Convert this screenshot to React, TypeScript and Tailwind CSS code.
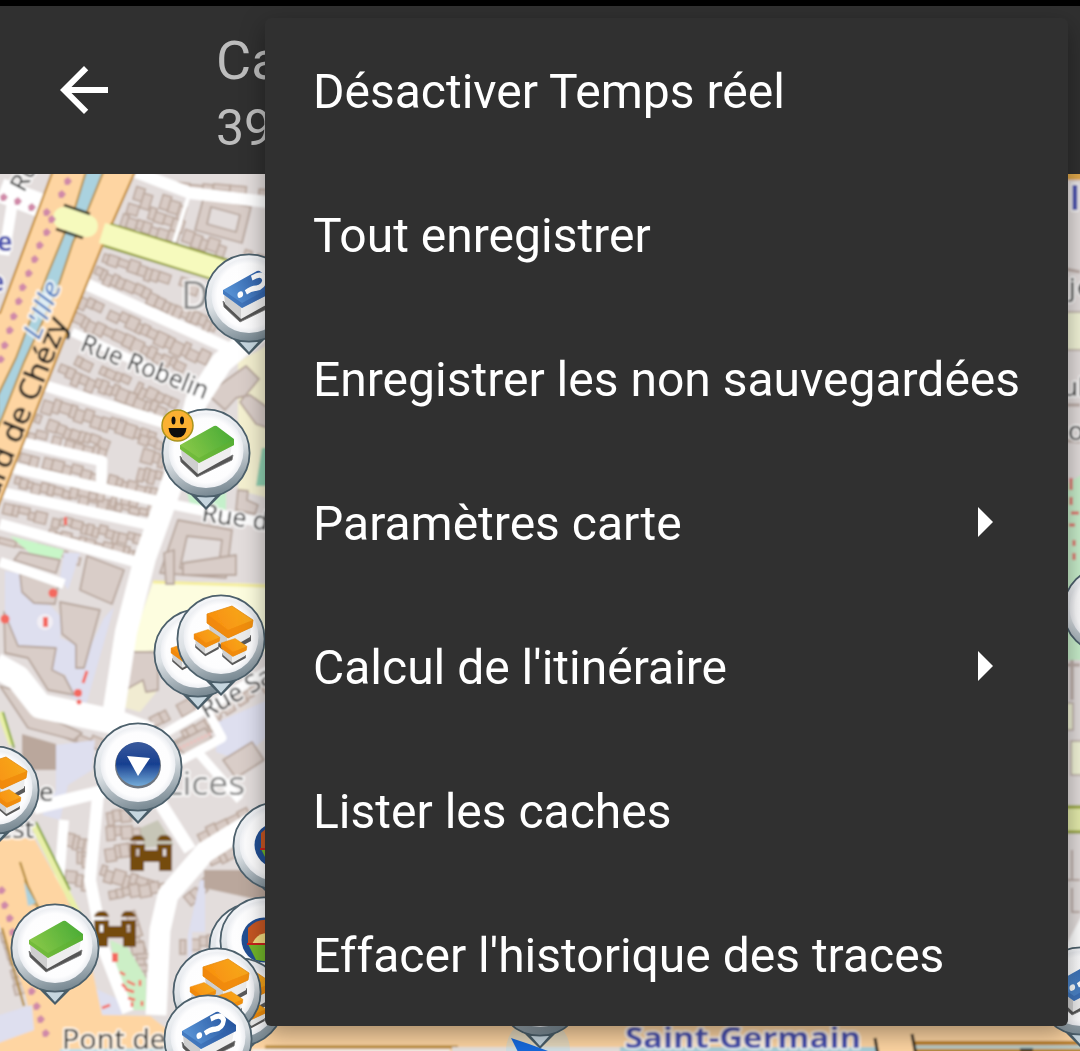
import React from 'react';

type Pt = [number, number];

/* ---------- map helpers ---------- */

function makeRandom(seed: number) {
  let s = seed * 7919 + 17;
  return () => {
    s = (s * 1103515245 + 12345) % 2147483648;
    return s / 2147483648;
  };
}

function Houses({ from, to, depth, seed, step = 9 }: { from: Pt; to: Pt; depth: number; seed: number; step?: number }) {
  const rnd = makeRandom(seed);
  const len = Math.hypot(to[0] - from[0], to[1] - from[1]);
  const angle = (Math.atan2(to[1] - from[1], to[0] - from[0]) * 180) / Math.PI;
  const boxes: React.ReactElement[] = [];
  let x = 0;
  let i = 0;
  while (x < len) {
    const w = step * (0.5 + rnd() * 0.8);
    const off = rnd() * depth * 0.4;
    const h = depth * (0.55 + rnd() * 0.45);
    if (rnd() > 0.08) boxes.push(<rect key={i} x={x} y={off} width={w} height={h} />);
    x += w;
    i += 1;
  }
  return (
    <g transform={`translate(${from[0]} ${from[1]}) rotate(${angle})`} fill="#d8cbc5" stroke="#bba89d" strokeWidth="1.6">
      {boxes}
    </g>
  );
}

const rows: { from: Pt; to: Pt; depth: number; step?: number }[] = [
  { from: [137, 186], to: [186, 201], depth: 16 },
  { from: [130, 200], to: [182, 216], depth: 14 },
  { from: [124, 213], to: [176, 230], depth: 14 },
  { from: [178, 180], to: [265, 188], depth: 9, step: 14 },
  { from: [186, 228], to: [265, 255], depth: 14 },
  { from: [106, 250], to: [200, 282], depth: 13 },
  { from: [98, 265], to: [215, 318], depth: 13 },
  { from: [82, 292], to: [205, 350], depth: 14 },
  { from: [76, 310], to: [180, 358], depth: 13 },
  { from: [80, 352], to: [175, 398], depth: 13 },
  { from: [62, 362], to: [168, 405], depth: 14 },
  { from: [46, 395], to: [160, 432], depth: 14 },
  { from: [38, 412], to: [108, 438], depth: 13 },
  { from: [30, 428], to: [102, 446], depth: 12 },
  { from: [142, 432], to: [164, 440], depth: 14 },
  { from: [144, 448], to: [162, 453], depth: 14 },
  { from: [140, 465], to: [160, 470], depth: 14 },
  { from: [110, 474], to: [160, 488], depth: 12 },
  { from: [22, 450], to: [96, 470], depth: 12 },
  { from: [16, 476], to: [155, 508], depth: 11 },
  { from: [72, 484], to: [155, 503], depth: 11 },
  { from: [5, 502], to: [60, 515], depth: 12 },
  { from: [62, 515], to: [144, 535], depth: 12 },
  { from: [50, 528], to: [138, 549], depth: 10 },
  { from: [0, 534], to: [70, 552], depth: 10, step: 18 },
  { from: [66, 724], to: [100, 738], depth: 12, step: 13 },
  { from: [116, 712], to: [150, 720], depth: 10 },
  { from: [148, 716], to: [178, 700], depth: 14, step: 12 },
  { from: [168, 738], to: [212, 714], depth: 16, step: 13 },
  { from: [180, 730], to: [262, 680], depth: 10 },
  { from: [68, 833], to: [88, 837], depth: 14 },
  { from: [68, 850], to: [86, 850], depth: 16 },
  { from: [66, 870], to: [84, 872], depth: 16 },
  { from: [106, 810], to: [134, 806], depth: 13 },
  { from: [106, 826], to: [134, 824], depth: 14 },
  { from: [104, 846], to: [130, 842], depth: 14 },
  { from: [103, 864], to: [150, 878], depth: 14 },
  { from: [108, 888], to: [164, 878], depth: 13 },
  { from: [136, 910], to: [146, 940], depth: 15 },
  { from: [148, 942], to: [150, 975], depth: 13 },
  { from: [75, 902], to: [88, 935], depth: 12 },
  { from: [195, 830], to: [240, 808], depth: 16, step: 11 },
  { from: [208, 858], to: [262, 833], depth: 10 },
  { from: [180, 934], to: [212, 934], depth: 16 },
  { from: [182, 895], to: [200, 880], depth: 14 },
  { from: [12, 930], to: [26, 985], depth: 12 },
];

const roads: { d: string; w: number }[] = [
  { d: 'M125 168 L190 193 L268 202', w: 12 },
  { d: 'M189 195 L174 242', w: 4 },
  { d: 'M86 284 L228 348', w: 12 },
  { d: 'M72 332 L205 394', w: 9 },
  { d: 'M270 322 L222 362 L196 402 L184 450 L166 500 L145 558 L126 632 L112 722', w: 22 },
  { d: 'M46 386 L168 424', w: 11 },
  { d: 'M20 442 L102 461 L101 484', w: 11 },
  { d: 'M10 467 L165 503', w: 11 },
  { d: 'M0 492 L155 526', w: 11 },
  { d: 'M0 524 L140 563', w: 11 },
  { d: 'M0 562 L64 584', w: 10 },
  { d: 'M175 505 L268 524', w: 10 },
  { d: 'M-5 665 L18 678 L40 706 L115 722 L150 735', w: 25 },
  { d: 'M140 748 L206 709 L268 670', w: 9 },
  { d: 'M208 712 L222 738 L160 772', w: 9 },
  { d: 'M196 750 L240 800', w: 9 },
  { d: 'M152 790 L190 850', w: 13 },
  { d: 'M34 808 L108 790', w: 13 },
  { d: 'M98 795 L90 880 L104 950 L128 1012', w: 12 },
  { d: 'M64 820 L58 895', w: 10 },
  { d: 'M265 815 L205 852 L168 895 L160 930 L156 1015', w: 21 },
  { d: 'M0 190 L42 206', w: 24 },
  { d: 'M12 205 L4 255', w: 11 },
];

const dots: Pt[] = [
  [68, 181], [62, 194], [4, 197], [18, 201], [32, 207], [47, 212], [52, 219], [47, 232], [40, 245], [35, 259], [29, 273],
  [23, 287], [19, 301], [14, 316], [10, 330], [5, 345], [1, 359], [2, 890], [5, 905], [10, 918], [13, 932], [32, 991], [37, 1006],
  [41, 1019], [46, 1033], [888, 1035], [891, 1049],
];

/* ---------- pins and their symbols ---------- */

function Book({ kind }: { kind: 'green' | 'blue' }) {
  return (
    <g>
      <path d="M-26 3 L-9 19 L27 2 L26 7 L-9 24 L-25 9 Z" fill="#555" stroke="#777" strokeWidth="0.8" strokeLinejoin="round" />
      <path d="M-25 -4 L-8 8 L-8 21 L-24 6 Z" fill="#cfcfcf" />
      <path d="M-8 8 L26 -8 L24 3 L-8 21 Z" fill="#eee" />
      <path
        d="M-26 -8 L8 -27 Q10 -28 12 -26 L28 -14 L28 -8 L-7 10 L-26 -4 Z"
        fill={kind === 'green' ? 'url(#bookGreen)' : 'url(#bookBlue)'}
      />
      <path d="M-26 -8 L-7 5 L28 -14 L28 -8 L-7 10 L-26 -4 Z" fill={kind === 'green' ? '#5fb030' : '#2f5fa8'} opacity="0.5" />
      {kind === 'blue' && (
        <g transform="translate(2 -11) rotate(-22) skewX(-14)" fill="none" stroke="#fff" strokeWidth="5">
          <path d="M2 -8 Q14 -10 15 -2 Q13 5 5 3 Q0 1 -6 3" />
          <circle cx="-12" cy="3" r="3" fill="#fff" stroke="none" />
        </g>
      )}
    </g>
  );
}

function Brick({ x, y, s }: { x: number; y: number; s: number }) {
  return (
    <g transform={`translate(${x} ${y}) scale(${s})`}>
      <path d="M-21 9 L-3 25 L21 12 L21 18 L-3 31 L-21 15 Z" fill="#5a5a5a" />
      <path d="M-21 0 L-3 12 L-3 27 L-20 12 Z" fill="#cfcfcf" />
      <path d="M-3 12 L21 0 L20 14 L-3 27 Z" fill="#ececec" />
      <path d="M-23 -9 L2 -17 L23 -3 L22 4 L-2 15 L-23 0 Z" fill="url(#brick)" stroke="#e38a10" strokeWidth="0.8" />
      <path d="M-23 -9 L-2 7 L23 -3 L22 4 L-2 15 L-23 0 Z" fill="#ee8609" opacity="0.7" />
    </g>
  );
}

type Kind = 'green' | 'blue' | 'bricks' | 'down' | 'globe' | 'none';

function Pin({ x, y, kind }: { x: number; y: number; kind: Kind }) {
  return (
    <g transform={`translate(${x} ${y})`}>
      <path d="M-17 40 L0 57 L17 40 Z" fill="#4a5d68" />
      <path d="M-9 44 L0 54 L9 44 Z" fill="#c6d6df" />
      <circle r="43.6" fill="url(#rim)" stroke="#4d616c" strokeWidth="1.8" />
      <circle r="37.5" cy="-2.5" fill="url(#face)" />
      {kind === 'green' && <Book kind="green" />}
      {kind === 'blue' && <Book kind="blue" />}
      {kind === 'bricks' && (
        <g>
          <Brick x={9} y={-16} s={1} />
          <Brick x={-14} y={0} s={0.56} />
          <Brick x={13} y={9} s={0.56} />
        </g>
      )}
      {kind === 'down' && (
        <g>
          <circle r="23" cy="-1.5" fill="#6c7480" />
          <circle r="22" cy="-3" fill="url(#badge)" />
          <path d="M-11 -11 L12 -9 L0 9 Z" fill="#fff" />
        </g>
      )}
      {kind === 'globe' && (
        <g>
          <circle r="22.5" cy="-1" fill="#234f93" />
          <path d="M-16 -13 Q-7 -23 6 -21 L6 4 L-16 3 Z" fill="#c65722" />
          <path d="M-16 3 L8 3 L6 21 L-8 19 Z" fill="#72b62a" />
          <path d="M-9 -2 Q-4 -9 6 -8 L6 3 L-12 3 Z" fill="#f3dc80" />
          <path d="M-17 3 L8 3" stroke="#c8241b" strokeWidth="2" />
        </g>
      )}
    </g>
  );
}

function Castle({ x, y }: { x: number; y: number }) {
  return (
    <path
      transform={`translate(${x} ${y})`}
      fill="#744b09"
      fillRule="evenodd"
      d="M0 6 Q1 1 6 0 H10 Q14 1 15 6 Z M27 6 Q28 1 32 0 H36 Q41 1 42 6 Z M0 9 H15 V15 H27 V9 H42 V36 H29 V27 H14 V36 H0 Z M6 14 V21 H9 V14 Z M33 14 V21 H36 V14 Z"
    />
  );
}

function Halo({ children, ...rest }: React.SVGProps<SVGTextElement>) {
  return (
    <text
      stroke="#fff"
      strokeOpacity="0.75"
      strokeWidth="4"
      strokeLinejoin="round"
      paintOrder="stroke"
      fontFamily="Open Sans, Noto Sans, sans-serif"
      lengthAdjust="spacingAndGlyphs"
      {...rest}
    >
      {children}
    </text>
  );
}

function CityMap() {
  return (
    <svg className="block h-[877px] w-full" viewBox="0 174 1080 877" aria-hidden="true">
      <defs>
        <linearGradient id="rim" x1="0.35" y1="0" x2="0.6" y2="1">
          <stop offset="0" stopColor="#f6f7fa" />
          <stop offset="0.5" stopColor="#dce1e5" />
          <stop offset="1" stopColor="#74858f" />
        </linearGradient>
        <radialGradient id="face">
          <stop offset="0" stopColor="#fff" />
          <stop offset="0.85" stopColor="#fdfdfe" />
          <stop offset="1" stopColor="#eceef2" />
        </radialGradient>
        <linearGradient id="bookGreen" x1="0" y1="0.6" x2="1" y2="0.2">
          <stop offset="0" stopColor="#8ac948" />
          <stop offset="1" stopColor="#48ab36" />
        </linearGradient>
        <linearGradient id="bookBlue" x1="0" y1="0.6" x2="1" y2="0.2">
          <stop offset="0" stopColor="#5b97d9" />
          <stop offset="1" stopColor="#23509a" />
        </linearGradient>
        <linearGradient id="brick" x1="0" y1="0.6" x2="1" y2="0.2">
          <stop offset="0" stopColor="#f98c0c" />
          <stop offset="1" stopColor="#f6ab1e" />
        </linearGradient>
        <linearGradient id="badge" x1="0" y1="0" x2="0" y2="1">
          <stop offset="0" stopColor="#3a5a9c" />
          <stop offset="0.5" stopColor="#173f90" />
          <stop offset="1" stopColor="#74abd8" />
        </linearGradient>
        <filter id="soft" filterUnits="userSpaceOnUse" x="0" y="170" width="1080" height="885">
          <feGaussianBlur stdDeviation="0.95" />
        </filter>
        <filter id="softPin" filterUnits="userSpaceOnUse" x="0" y="170" width="1080" height="885">
          <feGaussianBlur stdDeviation="0.5" />
        </filter>
      </defs>

      <g filter="url(#soft)">
        <rect x="-10" y="160" width="1100" height="910" fill="#e3dddc" />
        {rows.map((r, i) => (
          <Houses key={i} from={r.from} to={r.to} depth={r.depth} step={r.step} seed={i + 3} />
        ))}

        {/* parks, gardens and squares */}
        <path d="M238 362 L268 345 L268 498 L238 490 Z" fill="#f4f0d0" />
        <path d="M153 581 L268 584 L268 652 L129 652 Z" fill="#fdfddf" />
        <path d="M153 582 L268 586" stroke="#f5ee9b" strokeWidth="3" />
        <path d="M10 536 L64 550 L60 560 L30 553 Z" fill="#c8f7c8" />
        <path d="M187 492 H226 V510 L190 504 Z" fill="#c5f0cb" />
        <path d="M262 448 H268 V486 H256 Z" fill="#8fd0b1" />
        <path d="M5 571 L22 574 L30 592 L50 605 L62 618 L60 638 L78 645 L80 668 L104 618 L114 607 L86 705 L66 694 L66 675 L52 670 L54 648 L18 646 L5 612 Z" fill="#dedfef" />
        <path d="M64 553 L80 553 L68 590 L60 578 Z" fill="#dedfef" />
        <path d="M56 745 L95 740 L92 770 L68 785 L60 820 L42 815 L56 790 Z" fill="#dedfef" />
        <path d="M218 722 L268 700 L268 736 L240 760 L216 752 Z" fill="#dedfef" />
        <path d="M188 935 L200 880 L205 880 V932 H192 V980 H188 Z M94 988 L120 1000 L122 1015 H102 Z" fill="#dedfef" />
        <path d="M125 655 L152 650 L158 690 L140 712 L116 705 Z" fill="#f1ecd2" />

        {/* large buildings */}
        <g fill="#d9cdc8" stroke="#b7a69c" strokeWidth="1.8" strokeLinejoin="round">
          <path d="M204 196 L251 207 L242 243 L195 230 Z M211 207 L207 224 L236 232 L240 215 Z" fillRule="evenodd" />
          <path d="M246 366 L259 379 L240 402 L256 424 L268 428 V408 L250 395 L236 398 L225 410 L207 394 Z" />
          <path d="M178 520 L232 530 L226 578 L160 573 Z M187 536 L180 568 L218 572 L222 540 Z" fillRule="evenodd" />
          <path d="M238 490 L248 491 L247 500 L258 505 L255 514 L236 510 Z" />
          <path d="M20 574 L58 586 L55 604 L34 603 L22 592 Z M60 602 L100 610 L84 668 L76 668 L76 645 L62 634 Z M4 612 L18 646 L56 648 L52 670 L64 676 L74 695 L48 690 L28 658 L5 653 Z" />
          <path d="M20 552 L60 560 L56 573 L14 560 Z M87 556 L124 570 L112 604 L98 598 L80 590 Z" />
          <path d="M164 553 L166 584 L174 584 L174 550 Z M183 563 L236 555 V575 H183 Z" />
          <path d="M130 652 L158 652 L158 690 L146 692 L143 680 L125 690 Z M0 686 L22 692 L40 714 L82 733 L74 740 L28 728 Z" />
          <path d="M223 760 L252 742 L264 760 L236 778 Z M175 744 L205 728 L212 738 L186 756 Z" />
        </g>
        <path d="M22 734 L56 744 V770 H22 Z M204 870 H268 V902 L204 888 Z" fill="#baa79c" />
        <path d="M140 828 L158 820 L174 845 L144 848 Z" fill="#c7c6b7" />
        <path d="M110 940 L128 948 L146 978 V1010 L124 1010 Z" fill="#ccefc6" />

        {/* streets */}
        {roads.map((r, i) => (
          <path key={i} d={r.d} fill="none" stroke="#fff" strokeWidth={r.w} strokeLinejoin="round" />
        ))}
        <path d="M176 750 L212 733" stroke="#f1bdb9" strokeWidth="3" strokeDasharray="2 2" />

        {/* boulevard along the water */}
        <path d="M55 165 L138 165 L103 244 L68 330 L-12 532 V313 L0 313 Z" fill="#fed5a2" stroke="#bd8620" strokeWidth="2" />
        <path d="M88 165 L106 165 L87 212 L73 242 L57 290 L24 362 L-2 428 V395 L16 358 L47 276 L75 208 Z" fill="#aad2df" stroke="#b08833" strokeWidth="1.8" />
        <path d="M107 235 L228 272" stroke="#8c9928" strokeWidth="25" />
        <path d="M102 233 L230 273" stroke="#f6fabd" strokeWidth="21" />
        <path d="M64 218 L87 226" stroke="#f6fabd" strokeWidth="22" strokeLinecap="round" />
        <path d="M64 205 L90 214 M56 229 L83 238" stroke="#24240e" strokeWidth="2.5" />

        <path d="M-2 838 L34 838 L64 892 L88 950 L102 1015 L150 1016 L168 1030 L175 1065 H-12 V1044 L34 1030 L24 990 L-2 922 Z" fill="#fed5a2" />
        <path d="M-10 1018 L32 1005 L34 1030 L-10 1046 Z" fill="#dedfef" />
        <path d="M2 928 L24 1006 M20 862 L34 905 M25 880 L44 920" fill="none" stroke="#b08833" strokeWidth="2.2" />
        <path d="M24 882 L36 903 L28 906 Z" fill="#aad2df" />
        <path d="M0 712 L12 745 M34 826 L80 918" stroke="#e9f0a7" strokeWidth="6" />
        <path d="M3 712 L14 748 M36 822 L70 890" stroke="#7fa12e" strokeWidth="2" />
        <path d="M60 1051 L268 1049" stroke="#c3dfe8" strokeWidth="4" />

        {dots.map(([x, y], i) => (
          <path key={i} d={`M${x - 4} ${y - 1} l4 -3 l4 4 l-3 4 h-4 Z`} fill="#d089a8" />
        ))}
        <g fill="#f4695f">
          <rect x="64" y="517" width="3" height="8" />
          <circle cx="53" cy="593" r="4.5" />
          <circle cx="5" cy="619" r="4.5" />
          <circle cx="45" cy="622" r="8" fill="#f2eef4" />
          <rect x="43" y="617" width="5" height="10" />
          <circle cx="78" cy="693" r="4" />
          <circle cx="79" cy="702" r="2.5" />
          <path d="M87 671 l-4 12" stroke="#f4695f" strokeWidth="3" />
          <rect x="112" y="953" width="6" height="9" />
          <path d="M120 972 l5 3 m2 6 l8 4 m-10 4 l9 3 m-6 6 l7 2 m5 -20 v6 m-18 -2 l4 4 m6 14 v5 m10 -6 v5 M102 1008 l8 -3" stroke="#f4695f" strokeWidth="2.5" />
        </g>

        <Castle x={130} y={835} />
        <Castle x={94} y={911} />

        {/* area right of the menu */}
        <g>
          <rect x="1060" y="170" width="30" height="10" fill="#e0a84c" />
          <path d="M1066 484 L1090 470 V660 H1066 Z" fill="#c8eecb" />
          <path d="M1071 478 v12 m0 7 v8 m0 8 h8 m-10 12 h6 m-1 15 v6 m0 7 v7" stroke="#e26f6b" strokeWidth="3" fill="none" />
          <path d="M1060 440 L1080 442 M1060 405 H1080 M1060 268 L1080 272 M1060 665 H1080 M1072 660 V700" stroke="#baaaa4" strokeWidth="3" />
          <path d="M1066 312 H1084 V350 H1066 Z M1066 703 H1073 V730 H1066 Z M1071 741 H1084 V775 H1071 Z" fill="#f3f5d8" stroke="#baaaa4" strokeWidth="1.5" />
          <path d="M1060 805 H1090 V833 H1060 Z" fill="#e5ecac" />
          <path d="M1060 807 H1090 M1060 832 H1090" stroke="#97a53a" strokeWidth="3" />
          <path d="M1060 880 H1080 M1072 888 V912 H1080 M1072 850 V880" stroke="#bcaba5" strokeWidth="2" fill="none" />
          <path d="M1066 945 L1090 900 V1030 H1066 Z" fill="#fff" />
        </g>

        {/* quay below the menu */}
        <path d="M245 1015 H1090 V1065 H245 Z" fill="#fed5a2" />
        <path d="M265 1047 H458" stroke="#b88a35" strokeWidth="3" />
        <path d="M252 1051 H450" stroke="#f7f0ea" strokeWidth="4" />
        <path d="M452 1060 V1047 H620 V1060 Z" fill="#e7e2de" />
        <path d="M620 1047 H876 V1060 H620 Z" fill="#a9cfd9" />
        <path d="M914 1043 H1090" stroke="#ba8122" strokeWidth="4" />
        <path d="M914 1047 H1090" stroke="#a9c8ca" strokeWidth="3" />
        <path d="M914 1051 H1090" stroke="#b5852c" strokeWidth="4" />
        <path d="M875 1038 L878 1055 M912 1034 L916 1055 M1020 1050 H1033" stroke="#27231b" strokeWidth="3" />

        {/* labels */}
        <Halo x="-3" y="251" fontSize="26" fontWeight="700" fill="#474fae">e</Halo>
        <Halo x="-11" y="291" fontSize="26" fontWeight="700" fill="#474fae">e</Halo>
        <Halo transform="translate(24 193) rotate(-62)" fontSize="24" fill="#222">Ru</Halo>
        <Halo transform="translate(39 341) rotate(-68)" fontSize="26" fontStyle="italic" fill="#4a7ac0" textLength="60">L'Ille</Halo>
        <text
          transform="translate(68 322) rotate(-68)"
          textAnchor="end"
          fontSize="29"
          fontFamily="Open Sans, Noto Sans, sans-serif"
          fill="#1c1c1c"
          stroke="#1c1c1c"
          strokeWidth="0.6"
          textLength="206"
          lengthAdjust="spacingAndGlyphs"
        >
          vard de Chézy
        </text>
        <Halo transform="translate(79 350) rotate(21.5)" fontSize="25" fill="#222" textLength="135">Rue Robelin</Halo>
        <Halo x="181" y="309" fontSize="38" fill="#858585">D</Halo>
        <Halo transform="translate(201 521) rotate(8)" fontSize="25" fill="#222">Rue d</Halo>
        <Halo transform="translate(206 719) rotate(-29)" fontSize="25" fill="#222">Rue Sa</Halo>
        <Halo x="164" y="795" fontSize="33" fill="#858585" textLength="81">Lices</Halo>
        <Halo x="39" y="801" fontSize="26" fill="#222">e</Halo>
        <Halo x="34" y="838" fontSize="26" fill="#222" textAnchor="end">est</Halo>
        <Halo x="62" y="1049" fontSize="28" fill="#222" textLength="104">Pont de</Halo>
        <Halo x="625" y="1048" fontSize="29" fontWeight="700" fill="#474fae" textLength="236">Saint-Germain</Halo>
        <Halo x="1070" y="210" fontSize="32" fontWeight="700" fill="#474fae">l</Halo>
        <Halo x="1069" y="296" fontSize="26" fill="#222">j</Halo>
        <Halo x="1077" y="296" fontSize="26" fill="#222">e</Halo>
        <Halo x="1062" y="396" fontSize="26" fill="#222">ul</Halo>
        <Halo x="1068" y="440" fontSize="26" fill="#222">o</Halo>
      </g>

      <g filter="url(#softPin)">
        <Pin x={249} y={298} kind="blue" />
        <Pin x={206} y={453} kind="green" />
        <g transform="translate(177.5 425.5)">
          <circle r="15.5" fill="#fbb130" stroke="#a9931d" strokeWidth="1.5" />
          <ellipse cx="-4" cy="-5" rx="2" ry="4" fill="#0a0a0a" />
          <ellipse cx="4.5" cy="-5" rx="2" ry="4" fill="#0a0a0a" />
          <path d="M-9 2.5 H9 Q8 12 0 12 Q-8 12 -9 2.5 Z" fill="#0a0a0a" />
        </g>
        <Pin x={198} y={653} kind="bricks" />
        <Pin x={221} y={639} kind="bricks" />
        <Pin x={138} y={767} kind="down" />
        <Pin x={-5} y={790} kind="bricks" />
        <Pin x={277} y={846} kind="globe" />
        <Pin x={55} y={948} kind="green" />
        <Pin x={253} y={947} kind="none" />
        <Pin x={264} y={941} kind="globe" />
        <Pin x={240} y={1002} kind="bricks" />
        <Pin x={217} y={992} kind="bricks" />
        <Pin x={208} y={1039} kind="blue" />
        <Pin x={1107} y={610} kind="green" />
        <Pin x={1081} y={991} kind="blue" />
        <circle cx="538" cy="1050" r="32" fill="#a7dcf5" opacity="0.3" />
        <Pin x={540} y={992} kind="none" />
        <path d="M511 1038 Q530 1044 548 1051 V1056 H520 Z" fill="#1769dc" />
      </g>
    </svg>
  );
}

/* ---------- popup menu ---------- */

const items: { label: string; submenu?: boolean }[] = [
  { label: 'Désactiver Temps réel' },
  { label: 'Tout enregistrer' },
  { label: 'Enregistrer les non sauvegardées' },
  { label: 'Paramètres carte', submenu: true },
  { label: "Calcul de l'itinéraire", submenu: true },
  { label: 'Lister les caches' },
  { label: "Effacer l'historique des traces" },
];

function OverflowMenu() {
  return (
    <ul
      role="menu"
      className="absolute top-[18px] left-[265px] w-[803px] rounded-[6px] bg-[#303030] shadow-[0_8px_24px_rgba(0,0,0,0.36)]"
    >
      {items.map((item) => (
        <li key={item.label} role="menuitem" className="flex h-36 items-center justify-between pr-[75px] pl-12">
          <span className="pt-[3px] text-[48px] leading-none whitespace-nowrap text-white">{item.label}</span>
          {item.submenu && (
            <svg className="h-[30px] w-[15px] shrink-0" viewBox="0 0 15 30" fill="#fff">
              <path d="M0 0 L15 15 L0 30 Z" />
            </svg>
          )}
        </li>
      ))}
    </ul>
  );
}

export default function App() {
  return (
    <div className="relative flex h-[1051px] w-[1080px] flex-col overflow-hidden font-[Roboto,sans-serif]">
      <div className="h-1.5 shrink-0 bg-black" />
      <header className="flex h-[168px] shrink-0 items-center bg-[#303030] pl-[60px]">
        <svg className="h-12 w-12" viewBox="4 4 16 16" fill="#fff">
          <path d="M20 11H7.83l5.59-5.59L12 4l-8 8 8 8 1.41-1.41L7.83 13H20v-2z" />
        </svg>
        <div className="ml-[108px] flex flex-col pt-[5px] whitespace-nowrap text-[#bdbdbd]">
          <span className="text-[54px] leading-[71px]">Ca</span>
          <span className="text-[50px] leading-[64px]">39</span>
        </div>
      </header>
      <CityMap />
      <OverflowMenu />
    </div>
  );
}
